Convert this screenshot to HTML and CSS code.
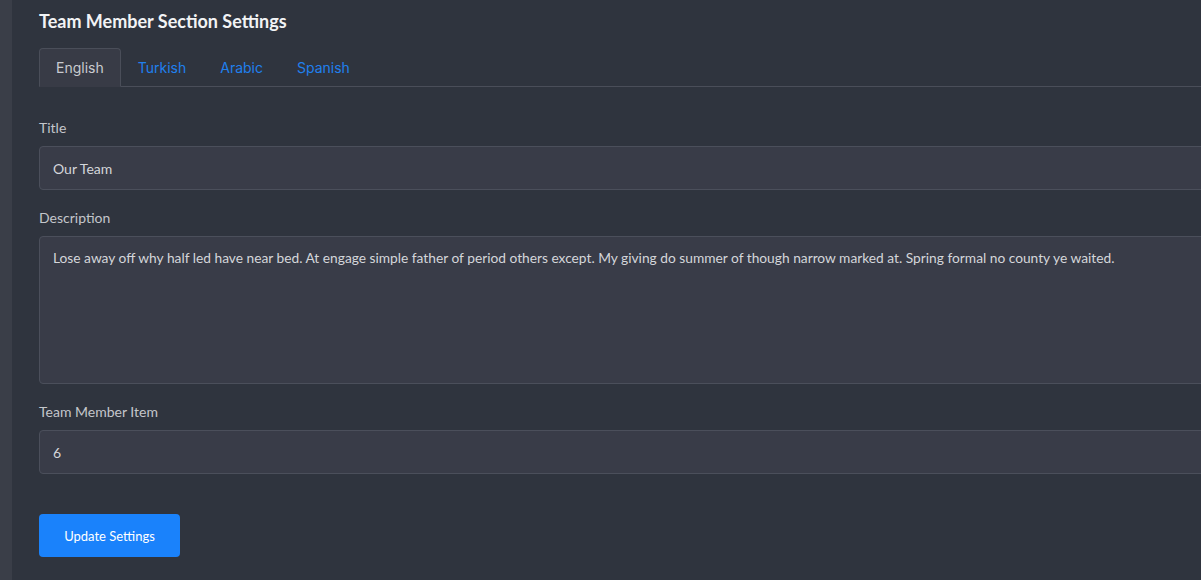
FILE: index.html
```html
<!DOCTYPE html>
<html lang="en">
<head>
    <meta charset="UTF-8">
    <meta name="viewport" content="width=device-width, initial-scale=1.0">
    <title>Team Member Section Settings</title>
    <link rel="stylesheet" href="styles.css">
</head>
<body>
    <div class="layout">
        <div class="side-strip"></div>
        <div class="content">
            <h1 class="page-title">Team Member Section Settings</h1>

            <div class="tabs">
                <a class="tab active" href="#">English</a>
                <a class="tab" href="#">Turkish</a>
                <a class="tab" href="#">Arabic</a>
                <a class="tab" href="#">Spanish</a>
            </div>

            <form class="settings-form">
                <div class="form-group">
                    <label for="title">Title</label>
                    <input type="text" id="title" value="Our Team">
                </div>

                <div class="form-group">
                    <label for="description">Description</label>
                    <textarea id="description">Lose away off why half led have near bed. At engage simple father of period others except. My giving do summer of though narrow marked at. Spring formal no county ye waited.</textarea>
                </div>

                <div class="form-group">
                    <label for="memberItem">Team Member Item</label>
                    <input type="text" id="memberItem" value="6">
                </div>

                <button type="button" class="btn-primary">Update Settings</button>
            </form>
        </div>
    </div>
</body>
</html>
```

FILE: styles.css
```css
html, body {
    margin: 0;
    padding: 0;
    height: 100%;
    overflow: hidden;
    background-color: #2f343e;
}
body {
    font-family: Lato, "Liberation Sans", sans-serif;
    color: #c9cbd0;
}
.layout {
    display: flex;
    min-height: 100%;
}
.side-strip {
    width: 12px;
    flex-shrink: 0;
    background-color: #3a3e48;
}
.content {
    width: 1220px;
    flex-shrink: 0;
    padding: 9px 0 0 27px;
}
.page-title {
    margin: 0 0 15px;
    font-size: 18px;
    font-weight: 700;
    line-height: 24px;
    color: #f2f3f5;
}
.tabs {
    display: flex;
    border-bottom: 1px solid #4a4e59;
}
.tab {
    display: block;
    padding: 9px 16px 8px;
    margin-bottom: -1px;
    font-family: Inter, "Open Sans", sans-serif;
    font-size: 14px;
    line-height: 20px;
    color: #2080ee;
    text-decoration: none;
    border: 1px solid transparent;
    border-radius: 4px 4px 0 0;
}
.tab.active {
    color: #c9cbd0;
    background-color: #383b46;
    border-color: #4a4e59;
    border-bottom-color: #383b46;
}
.settings-form {
    padding-top: 31px;
}
.form-group {
    margin-bottom: 18px;
}
.form-group label {
    display: block;
    margin-bottom: 9px;
    font-size: 14px;
    line-height: 19px;
    color: #c4c6cb;
}
.form-group input,
.form-group textarea {
    display: block;
    width: 100%;
    box-sizing: border-box;
    padding: 11px 13px;
    font-family: Lato, "Liberation Sans", sans-serif;
    font-size: 14px;
    line-height: 20px;
    color: #d4d6da;
    background-color: #393c48;
    border: 1px solid #4b4f5b;
    border-radius: 4px;
    outline: none;
}
.form-group input {
    height: 44px;
}
.form-group textarea {
    height: 148px;
    resize: none;
    padding-top: 11px;
    font-size: 13.75px;
}
.btn-primary {
    margin-top: 22px;
    width: 141px;
    height: 43px;
    font-family: Lato, "Liberation Sans", sans-serif;
    font-size: 13px;
    color: #ffffff;
    background-color: #1a82fb;
    border: none;
    border-radius: 4px;
}
```
